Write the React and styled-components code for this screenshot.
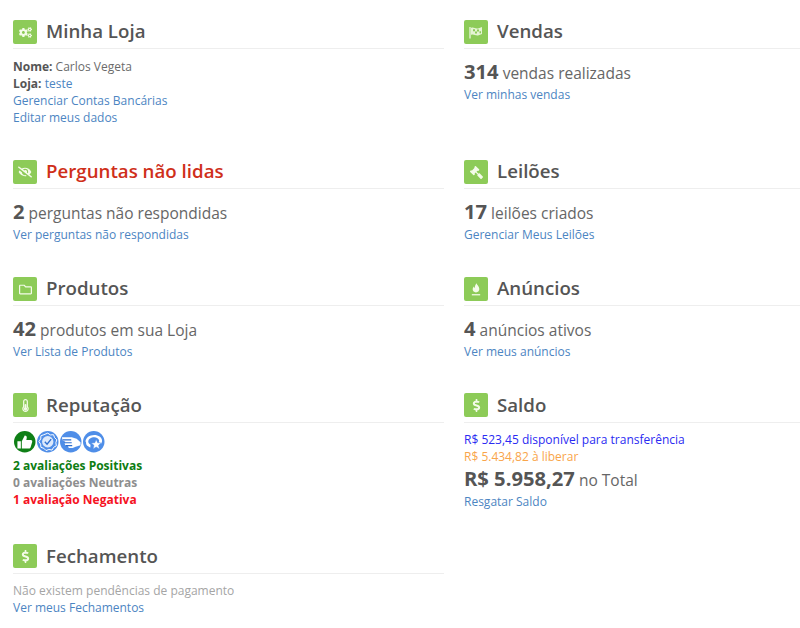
import React from "react";
import styled, { createGlobalStyle } from "styled-components";
import { FaCogs, FaEyeSlash, FaRegFolder, FaThermometerHalf, FaGavel, FaDollarSign } from "react-icons/fa";

const Global = createGlobalStyle`
  html, body { margin: 0; padding: 0; background: #fff; }
  body { font-family: "Open Sans", "Noto Sans", sans-serif; font-size: 12px; line-height: 17px; color: #666; overflow: hidden; }
`;

const Page = styled.div`
  width: 800px;
  height: 628px;
  padding: 20px 0 0 13px;
  box-sizing: border-box;
  overflow: hidden;
  display: grid;
  grid-template-columns: 431px 336px;
  column-gap: 20px;
  grid-template-rows: 140px 117px 116px 151px auto;
`;

const Section = styled.section`
  min-width: 0;
`;

const Header = styled.header`
  display: flex;
  align-items: flex-start;
  gap: 8px;
  height: 24px;
  padding-bottom: ${(p) => (p.$low ? 5 : 4)}px;
  border-bottom: 1px solid #eee;
  margin-bottom: ${(p) => p.$gap || 8}px;
`;

const IconBox = styled.span`
  width: 24px;
  height: 24px;
  flex: none;
  border-radius: 2px;
  background: #8dcb58;
  color: #f4fbe9;
  display: flex;
  align-items: center;
  justify-content: center;
  font-size: ${(p) => p.$size || 12}px;
  svg { transform: ${(p) => (p.$flip ? "scaleX(-1)" : "none")}; }
`;

const Title = styled.h2`
  margin: ${(p) => (p.$low ? 1 : 0)}px 0 0 1px;
  font-size: 18.7px;
  line-height: 22px;
  font-weight: 600;
  color: ${(p) => (p.$alert ? "#cf2f1a" : "#555")};
`;

const Line = styled.div`
  font-size: 12px;
  line-height: 17px;
  color: ${(p) => p.$color || "#6b6b6b"};
  font-weight: ${(p) => (p.$bold ? 700 : 400)};
  white-space: nowrap;
`;

const Strong = styled.b`
  font-weight: 700;
  color: #555;
`;

const Link = styled.a`
  color: #4c85c2;
  text-decoration: none;
`;

const Stat = styled.div`
  font-size: 15.5px;
  line-height: 26px;
  color: #666;
  white-space: nowrap;
  b {
    font-size: 20.2px;
    font-weight: 700;
    color: #555;
  }
`;

const Badges = styled.div`
  display: flex;
  gap: 1.5px;
  height: 26px;
  padding-left: 1px;
  svg { display: block; width: 21.5px; height: 21.5px; }
`;

const BadgeThumb = () => (
  <svg viewBox="0 0 22 22">
    <circle cx="11" cy="11" r="11" fill="#0f7f16" />
    <path d="M3.500 10.500h3.500v7.500h-3.500z M8 10.500l3-6c1.600 0 2.400 1 2 2.800l-.4 1.900h4.600c1.200 0 1.700 1 1.400 2l-1.600 5.400c-.2.800-.9 1.400-1.800 1.400h-7.200z" fill="#fff" />
  </svg>
);
const BadgeCheck = () => (
  <svg viewBox="0 0 22 22">
    <circle cx="11" cy="11" r="11" fill="#4f8ee8" />
    <path d="M11 2.200l2.700 1.800 3.200-.2 1.100 3 2.300 2.200-1 3 .5 3.100-2.800 1.600-1.600 2.800-3.200-.6-3 1.100-2.200-2.300-3-1-.3-3.200-1.700-2.700 1.800-2.700.2-3.200 3-1.100z" fill="none" stroke="#fff" strokeWidth="1" />
    <circle cx="11" cy="11" r="5.800" fill="#dce9fb" />
    <path d="M8 11l2.300 2.500 4.200-5.200" fill="none" stroke="#2e6fd0" strokeWidth="1.400" />
  </svg>
);
const BadgeHand = () => (
  <svg viewBox="0 0 22 22">
    <circle cx="11" cy="11" r="11" fill="#4f8ee8" />
    <path d="M2 6.500h10l5 1.500 4 3.500v3l-5 1.500-3 1.500h-4l-1-2.500h-2.500l-1-3 1-1-3-1.500z" fill="#fff" />
    <path d="M2.500 9h9M4 12h8M5.500 15h7" stroke="#2e6fd0" strokeWidth="1.200" />
  </svg>
);
const BadgeStar = () => (
  <svg viewBox="0 0 22 22">
    <circle cx="11" cy="11" r="11" fill="#4f8ee8" />
    <path d="M2.500 11C2.800 7 6.800 4.200 11.500 4.200c4.300 0 7.700 2.300 8 5.600.1 1.100-.2 2.200-.8 3.100l-2.700-1.500c.4-.5.600-1 .5-1.600-.3-2-2.600-3.500-5-3.500-3.200 0-6 1.800-6.100 4.500 0 1.400.8 2.500 2.300 3.200l-.2 2.800c-1-.3-1.700-.7-2.200-1.300-1.400 0-2.200-1.600-2.300-4.500z" fill="#fff" />
    <path d="M13.500 8.600l1.500 3.400 3.600.3-2.700 2.400.9 3.600-3.300-1.900-3.200 1.900.9-3.600-2.700-2.400 3.600-.3z" fill="#fff" stroke="#4f8ee8" strokeWidth=".5" />
  </svg>
);

const FlagIcon = () => (
  <svg width="14" height="13" viewBox="0 0 14 13">
    <path d="M1 1v11.500" stroke="currentColor" strokeWidth="1.200" fill="none" />
    <path d="M2 2c2.500-1.300 4.500 1.200 7 .4 1.500-.4 2.600-.9 4-1.400v7c-1.400.6-2.500 1.200-4 1.500-2.500.5-4.500-1.800-7-.5z" fill="currentColor" opacity=".85" />
    <path d="M4 3.200h2v2h-2zM8 3.600h2v2h-2zM6 5.500h2v2h-2zM10.500 5.200h1.500v2h-1.500z" fill="#8dcb58" />
  </svg>
);
const FlameIcon = () => (
  <svg width="10" height="13" viewBox="0 0 12 15">
    <path d="M6.500 0c.6 2.200 3.500 3.800 3.500 7 0 2.300-1.700 4-4 4S2 9.300 2 7.300c0-1.500.8-2.500 1.600-3.300.1 1 .5 1.600 1 1.900C4.500 3.800 5.200 1.800 6.500 0z" fill="currentColor" />
    <path d="M1 13.800h10" stroke="currentColor" strokeWidth="1.500" />
  </svg>
);

const Card = ({ icon, size, flip, title, alert, low, gap, children }) => (
  <Section>
    <Header $gap={gap} $low={low}>
      <IconBox $size={size} $flip={flip}>{icon}</IconBox>
      <Title $alert={alert} $low={low}>{title}</Title>
    </Header>
    {children}
  </Section>
);

export default function App() {
  return (
    <>
      <Global />
      <Page>
        <Card icon={<FaCogs />} size={13} title="Minha Loja" gap={9}>
          <Line><Strong>Nome:</Strong> Carlos Vegeta</Line>
          <Line><Strong>Loja:</Strong> <Link>teste</Link></Line>
          <Line><Link>Gerenciar Contas Bancárias</Link></Line>
          <Line><Link>Editar meus dados</Link></Line>
        </Card>
        <Card icon={<FlagIcon />} title="Vendas" gap={9}>
          <Stat><b>314</b> vendas realizadas</Stat>
          <Line><Link>Ver minhas vendas</Link></Line>
        </Card>

        <Card icon={<FaEyeSlash />} size={14} title="Perguntas não lidas" alert gap={9}>
          <Stat><b>2</b> perguntas não respondidas</Stat>
          <Line><Link>Ver perguntas não respondidas</Link></Line>
        </Card>
        <Card icon={<FaGavel />} size={13} flip title="Leilões" gap={9}>
          <Stat><b>17</b> leilões criados</Stat>
          <Line><Link>Gerenciar Meus Leilões</Link></Line>
        </Card>

        <Card icon={<FaRegFolder />} size={13} title="Produtos" gap={9}>
          <Stat><b>42</b> produtos em sua Loja</Stat>
          <Line><Link>Ver Lista de Produtos</Link></Line>
        </Card>
        <Card icon={<FlameIcon />} title="Anúncios" gap={9}>
          <Stat><b>4</b> anúncios ativos</Stat>
          <Line><Link>Ver meus anúncios</Link></Line>
        </Card>

        <Card icon={<FaThermometerHalf />} size={13} title="Reputação" low>
          <Badges>
            <BadgeThumb /><BadgeCheck /><BadgeHand /><BadgeStar />
          </Badges>
          <Line $bold $color="#0d7d12">2 avaliações Positivas</Line>
          <Line $bold $color="#8e8e8e">0 avaliações Neutras</Line>
          <Line $bold $color="#f5131f">1 avaliação Negativa</Line>
        </Card>
        <Card icon={<FaDollarSign />} size={13} title="Saldo" low>
          <Line $color="#2b2bf2">R$ 523,45 disponível para transferência</Line>
          <Line $color="#f9a54a">R$ 5.434,82 à liberar</Line>
          <Stat><b>R$ 5.958,27</b> no Total</Stat>
          <Line><Link>Resgatar Saldo</Link></Line>
        </Card>

        <Card icon={<FaDollarSign />} size={13} title="Fechamento" low>
          <Line $color="#a5a5a5">Não existem pendências de pagamento</Line>
          <Line><Link>Ver meus Fechamentos</Link></Line>
        </Card>
      </Page>
    </>
  );
}
